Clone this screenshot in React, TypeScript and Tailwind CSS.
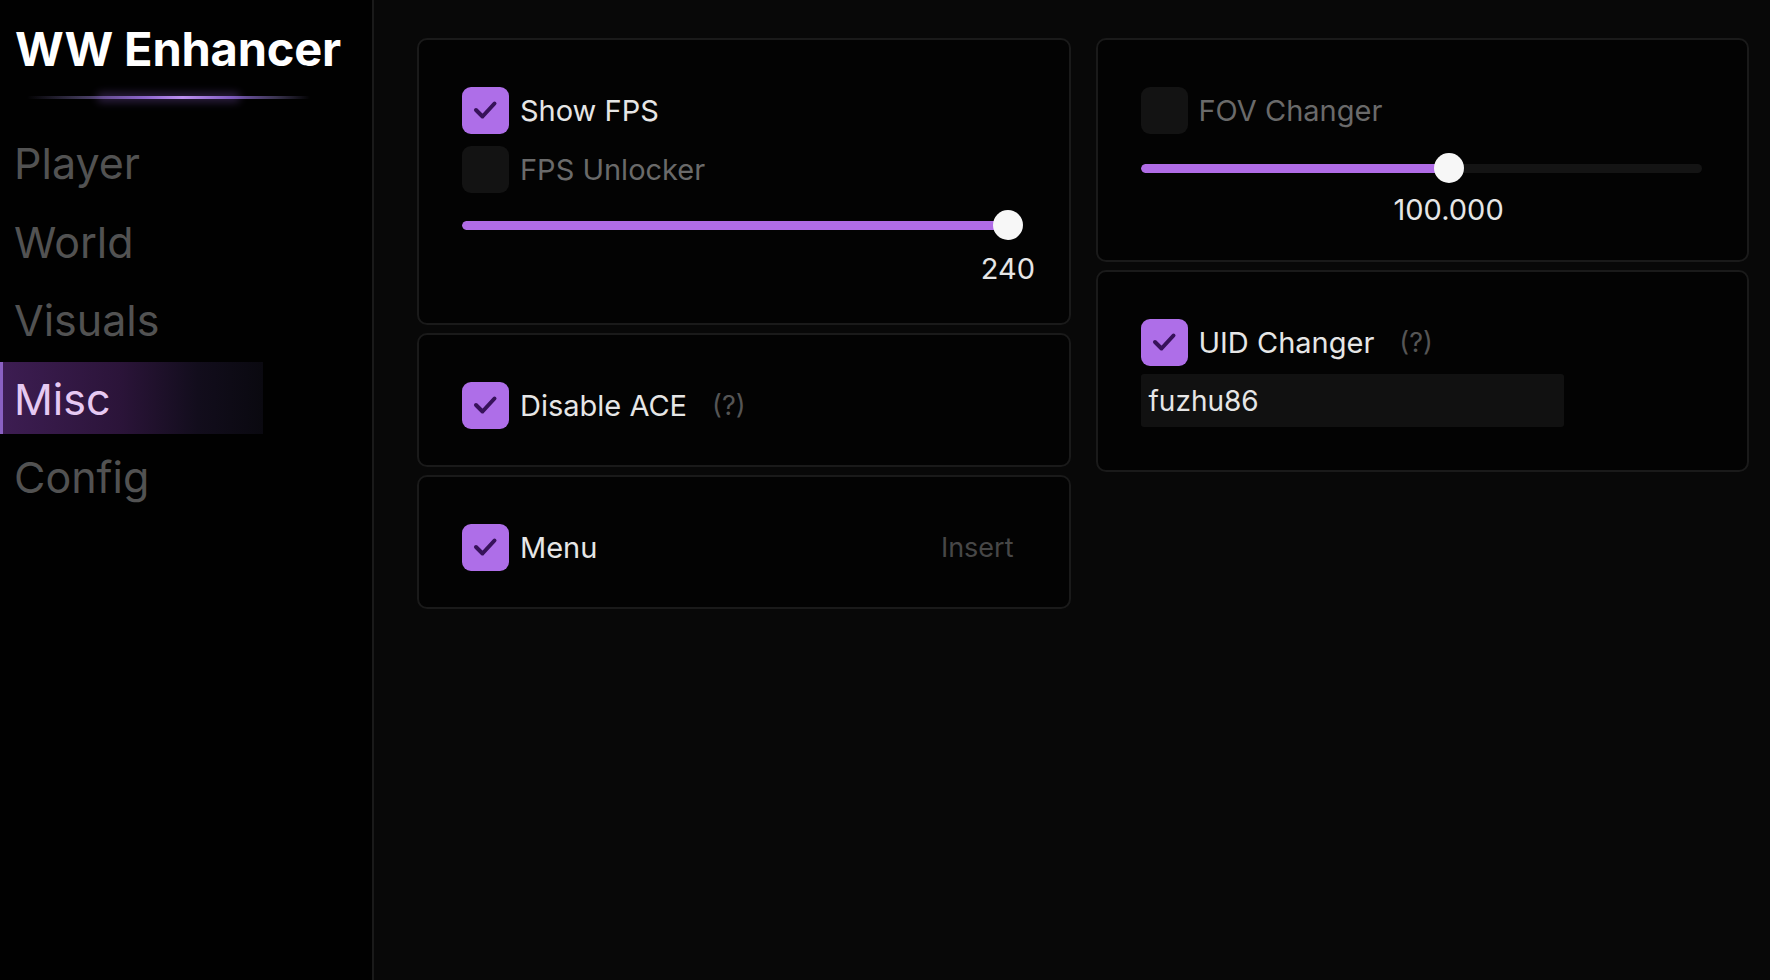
import React from "react";

function CheckBox({ checked }: { checked: boolean }) {
  return (
    <div
      className={
        "w-[47px] h-[47px] rounded-[9px] shrink-0 flex items-center justify-center " +
        (checked ? "bg-[#ae6ee8]" : "bg-[#131313]")
      }
    >
      {checked && (
        <svg width="47" height="47" viewBox="0 0 47 47">
          <polyline
            points="14,23 20.5,29.5 32.5,16.5"
            fill="none"
            stroke="#37125a"
            strokeWidth="4"
            strokeLinecap="round"
            strokeLinejoin="round"
          />
        </svg>
      )}
    </div>
  );
}

function Option({
  label,
  checked,
  help,
  hotkey,
}: {
  label: string;
  checked: boolean;
  help?: boolean;
  hotkey?: string;
}) {
  return (
    <div className="flex items-center h-[47px]">
      <CheckBox checked={checked} />
      <span
        className={
          "ml-[11px] text-[29px] leading-none " +
          (checked ? "text-[#e6e6e6]" : "text-[#6a6a6a]")
        }
      >
        {label}
      </span>
      {help && (
        <span className="ml-[25px] text-[27px] leading-none text-[#555555]">(?)</span>
      )}
      {hotkey && (
        <span className="ml-auto mr-[45px] text-[27px] leading-none text-[#474747]">
          {hotkey}
        </span>
      )}
    </div>
  );
}

function Slider({ frac, value, labelGap }: { frac: number; value: string; labelGap: number }) {
  const width = 561;
  const r = 15;
  const cx = r + frac * (width - 2 * r);
  return (
    <div className="flex flex-col w-[561px]">
      <div className="relative h-[30px] w-[561px] flex items-center">
        <div className="w-full h-[9px] rounded-full bg-[#141414] overflow-hidden">
          <div className="h-full rounded-full bg-[#b06ce6]" style={{ width: cx }} />
        </div>
        <div
          className="absolute top-0 w-[30px] h-[30px] rounded-full bg-[#f7f7f7]"
          style={{ left: cx - r }}
        />
      </div>
      <div className="relative h-[29px]" style={{ marginTop: labelGap }}>
        <span
          className="absolute top-0 -translate-x-1/2 text-[29px] leading-none text-[#e6e6e6] whitespace-nowrap"
          style={{ left: cx }}
        >
          {value}
        </span>
      </div>
    </div>
  );
}

function Card({ h, children }: { h: number; children: React.ReactNode }) {
  return (
    <div
      className="rounded-[10px] border-2 border-[#1a1a1a] bg-[#030303] pl-[43px] pr-[10px] pt-[47px]"
      style={{ height: h }}
    >
      {children}
    </div>
  );
}

const NAV = ["Player", "World", "Visuals", "Misc", "Config"];

export default function App() {
  return (
    <div className="flex w-[1770px] h-[980px] bg-[#080808] font-['Inter',_'Noto_Sans',_sans-serif] overflow-hidden">
      <aside className="w-[374px] shrink-0 bg-[#010101] border-r-2 border-[#1a1a1a] flex flex-col">
        <div className="pt-[25px] pl-[15px] text-[47px] font-bold leading-none text-white tracking-[-0.2px]">
          WW Enhancer
        </div>
        <div className="relative mt-[24px] ml-[27px] w-[283px] h-[3px]">
          <div className="absolute inset-0 rounded-full bg-[linear-gradient(90deg,rgba(40,40,60,0)_0%,#3a3450_18%,#8a66c8_42%,#c79bf5_55%,#7a5ab8_72%,#3a3450_88%,rgba(40,40,60,0)_100%)]" />
          <div className="absolute left-[70px] right-[70px] -top-[3px] h-[9px] rounded-full bg-[#9b6ae0] opacity-30 blur-[4px]" />
        </div>
        <nav className="mt-[27px] flex flex-col gap-[6.5px]">
          {NAV.map((n) =>
            n === "Misc" ? (
              <div
                key={n}
                className="h-[72px] w-[263px] flex items-center pl-[11px] pt-[3px] border-l-[3px] border-[#8a60c2] bg-[linear-gradient(90deg,#3d1d52_0%,#2b1439_45%,#120d1c_75%,#0a0910_100%)] text-[43px] leading-none text-[#e6c9f2]"
              >
                {n}
              </div>
            ) : (
              <div
                key={n}
                className="h-[72px] flex items-center pl-[14px] pt-[3px] text-[43px] leading-none text-[#525252]"
              >
                {n}
              </div>
            )
          )}
        </nav>
      </aside>

      <main className="flex-1 pl-[43px] pt-[38px] pr-[21px] grid grid-cols-2 gap-x-[25px] items-start">
        <div className="flex flex-col gap-[8px]">
          <Card h={287}>
            <div className="flex flex-col gap-[12px]">
              <Option label="Show FPS" checked />
              <Option label="FPS Unlocker" checked={false} />
            </div>
            <div className="mt-[17px]">
              <Slider frac={1} value="240" labelGap={14} />
            </div>
          </Card>
          <Card h={134}>
            <Option label="Disable ACE" checked help />
          </Card>
          <Card h={134}>
            <Option label="Menu" checked hotkey="Insert" />
          </Card>
        </div>

        <div className="flex flex-col gap-[8px]">
          <Card h={224}>
            <Option label="FOV Changer" checked={false} />
            <div className="mt-[19px]">
              <Slider frac={0.552} value="100.000" labelGap={12} />
            </div>
          </Card>
          <Card h={202}>
            <Option label="UID Changer" checked help />
            <div className="mt-[8px] w-[423px] h-[53px] rounded-[3px] bg-[#111111] flex items-center pl-[8px] text-[28px] leading-none text-[#e6e6e6]">
              fuzhu86
            </div>
          </Card>
        </div>
      </main>
    </div>
  );
}
